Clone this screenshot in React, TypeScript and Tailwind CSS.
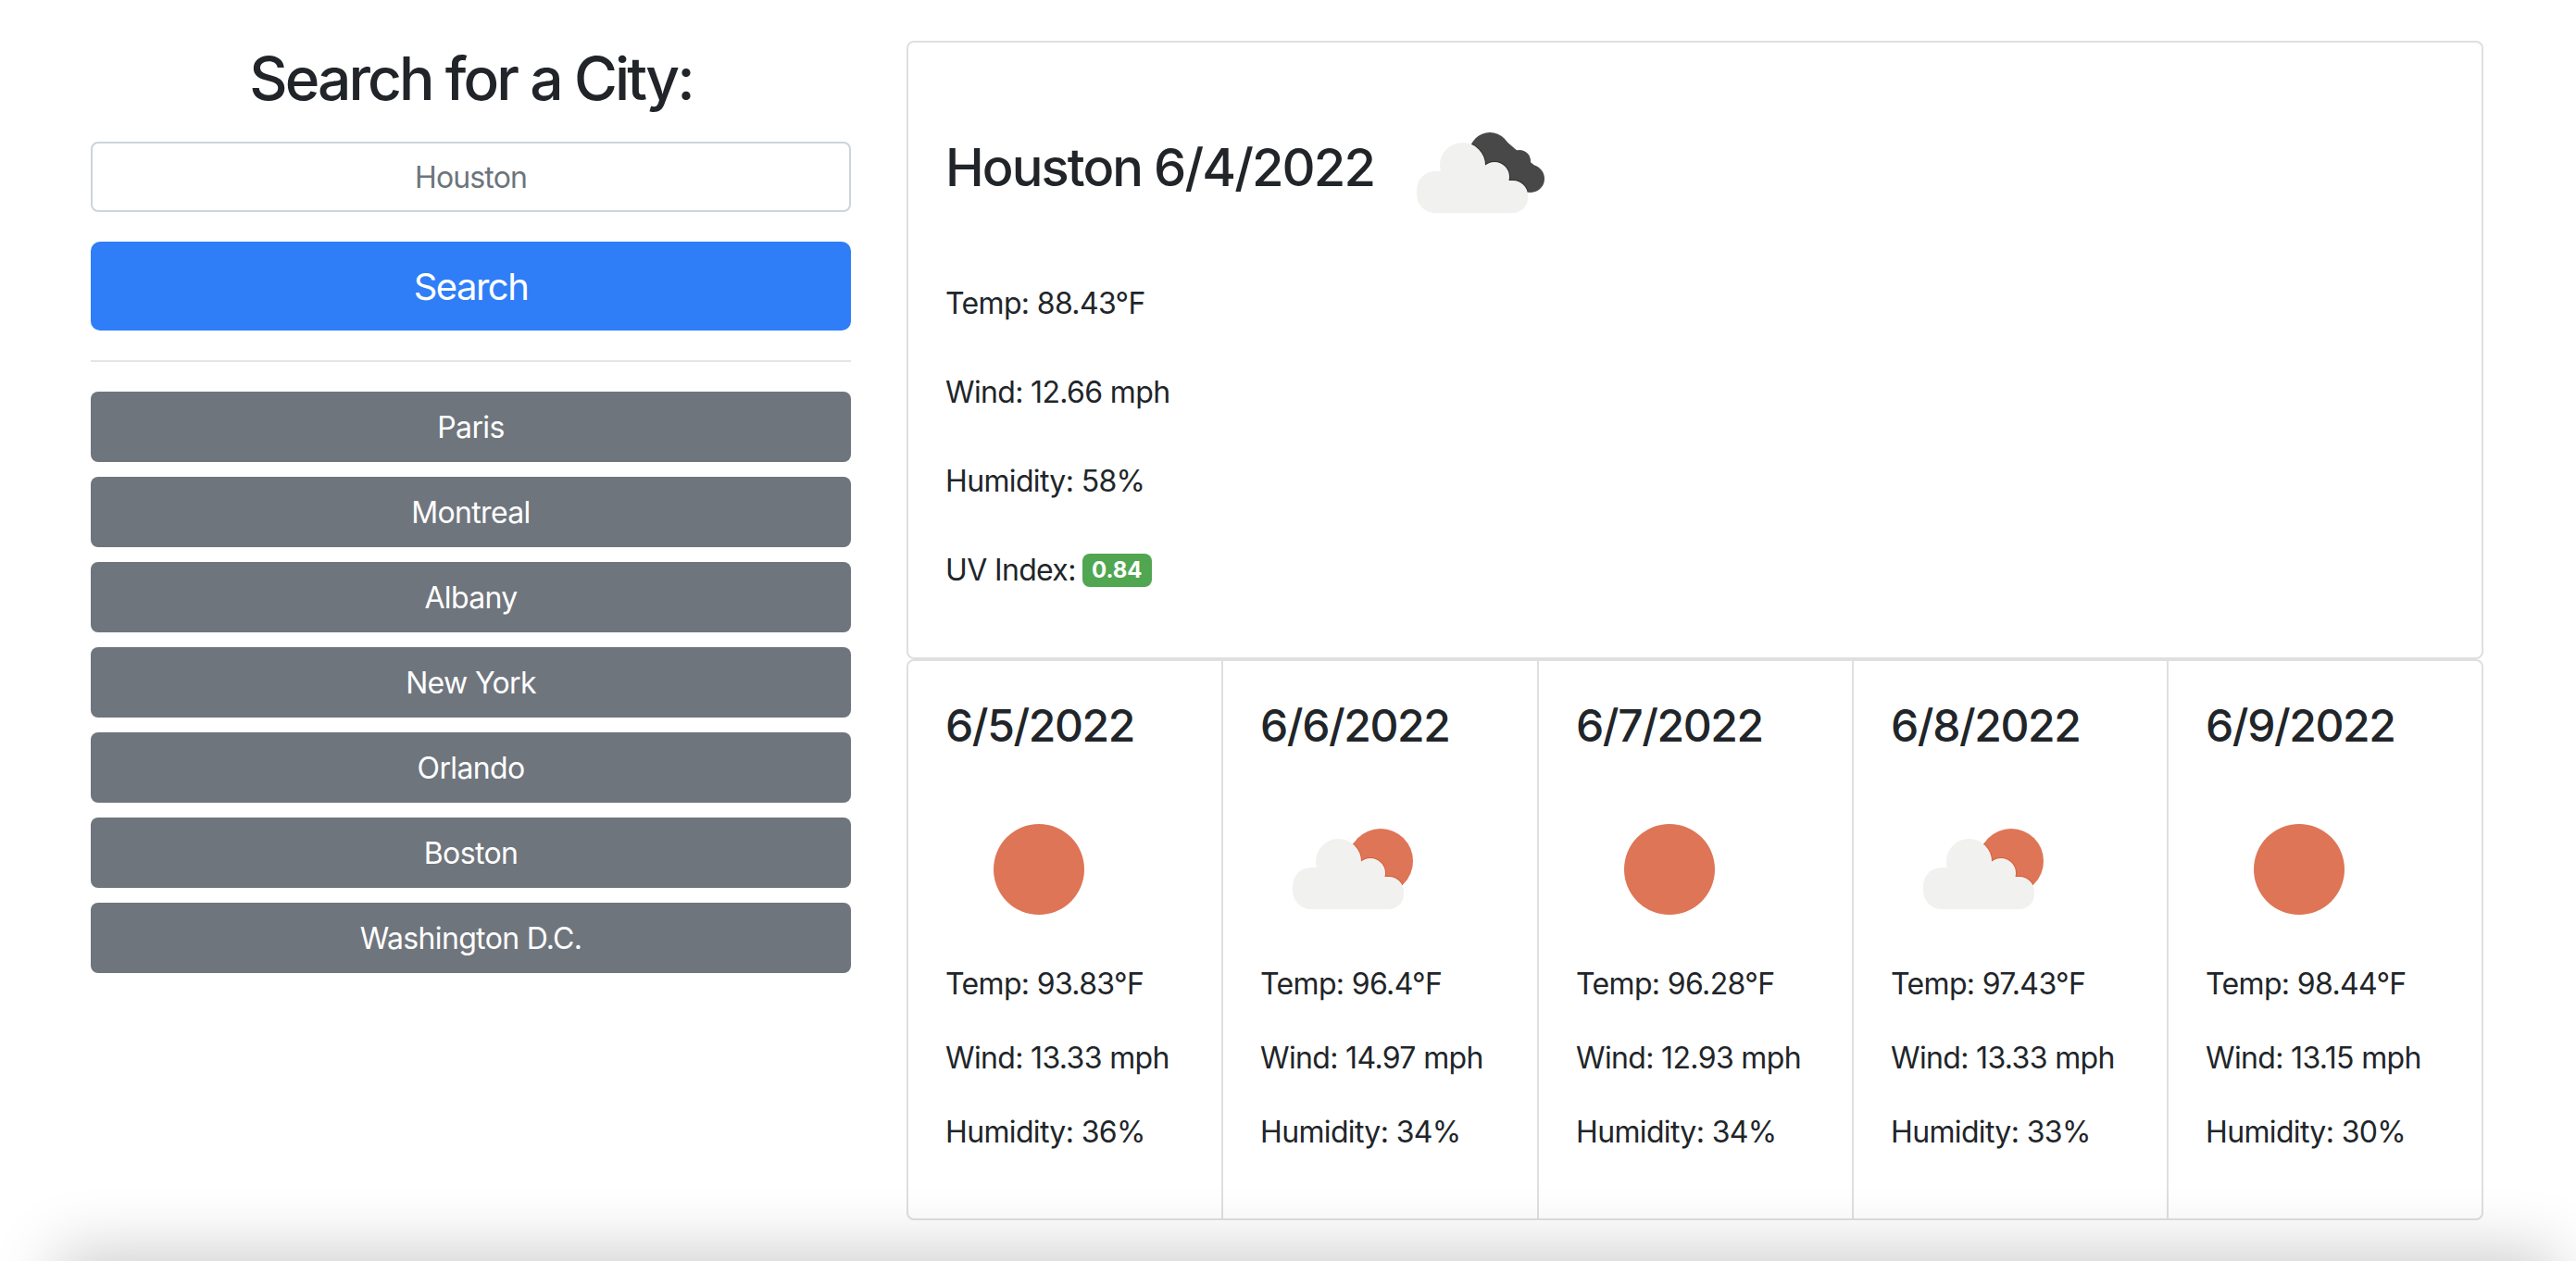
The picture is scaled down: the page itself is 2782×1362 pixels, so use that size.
const CITIES = ["Paris", "Montreal", "Albany", "New York", "Orlando", "Boston", "Washington D.C."];
const FORECAST = [
  { d: "6/5/2022", i: "sun", t: "93.83", w: "13.33", h: "36" },
  { d: "6/6/2022", i: "partly", t: "96.4", w: "14.97", h: "34" },
  { d: "6/7/2022", i: "sun", t: "96.28", w: "12.93", h: "34" },
  { d: "6/8/2022", i: "partly", t: "97.43", w: "13.33", h: "33" },
  { d: "6/9/2022", i: "sun", t: "98.44", w: "13.15", h: "30" },
];

function CloudParts() {
  return (
    <>
      <rect x="34" y="98" width="64" height="45" rx="20" />
      <rect x="90" y="108" width="64" height="35" rx="16" />
      <circle cx="83.5" cy="91.5" r="24.5" />
      <circle cx="118" cy="104" r="16" />
      <rect x="60" y="100" width="70" height="43" />
    </>
  );
}

function Icon({ kind }: { kind: string }) {
  return (
    <svg viewBox="0 0 200 200" className="w-[200px] h-[200px] block shrink-0">
      {kind === "sun" && <circle cx="100" cy="100" r="49" fill="#de7556" />}
      {kind === "partly" && (
        <>
          <defs>
            <clipPath id="sun-clip"><circle cx="129" cy="91" r="35" /></clipPath>
          </defs>
          <circle cx="129" cy="91" r="35" fill="#de7556" />
          <g clipPath="url(#sun-clip)" fill="#d9603c" stroke="#d9603c" strokeWidth="2"><CloudParts /></g>
          <g fill="#f1f2f0"><CloudParts /></g>
        </>
      )}
      {kind === "dark" && (
        <>
          <defs>
            <clipPath id="dark-clip">
              <circle cx="113" cy="78" r="22" />
              <circle cx="145" cy="87" r="12" />
              <circle cx="157" cy="106" r="15" />
              <path d="M95 68 L130 65 L165 95 L155 120 L110 110 Z" />
            </clipPath>
          </defs>
          <g fill="#484849">
            <circle cx="113" cy="78" r="22" />
            <circle cx="145" cy="87" r="12" />
            <circle cx="157" cy="106" r="15" />
            <path d="M95 68 L130 65 L165 95 L155 120 L110 110 Z" />
          </g>
          <g clipPath="url(#dark-clip)" fill="#2e2e30" stroke="#2e2e30" strokeWidth="2"><CloudParts /></g>
          <g fill="#f1f2f0"><CloudParts /></g>
        </>
      )}
    </svg>
  );
}

export default function App() {
  return (
    <div className="relative w-[2782px] h-[1362px] overflow-hidden bg-white text-[#212529] text-[32px] leading-[48px] tracking-[-0.65px] font-['Inter','Liberation_Sans',sans-serif]">
      <div className="flex gap-[60px] pl-[98px] pt-[44px]">
        <div className="w-[821px] shrink-0 flex flex-col">
          <h3 className="text-[64px] leading-[67px] font-[550] text-center mt-[7px] tracking-[-2.9px]">Search for a City:</h3>
          <input
            placeholder="Houston"
            className="mt-[35px] h-[76px] w-full rounded-lg border-2 border-[#ced4da] bg-white text-center text-[32px] tracking-[-0.85px] outline-none placeholder:text-[#6c757d]"
          />
          <button className="mt-[32px] h-[96px] pt-[2px] w-full rounded-[10px] bg-[#2f7ef7] text-white text-[40px] tracking-[-1.5px]">Search</button>
          <div className="mt-[32px] h-[2px] bg-[#e4e5e6]" />
          <div className="mt-[32px] flex flex-col gap-4">
            {CITIES.map((c) => (
              <button key={c} className="h-[76px] pt-[2px] w-full rounded-lg bg-[#6f757d] text-white text-[32px]">{c}</button>
            ))}
          </div>
        </div>

        <div className="w-[1703px] shrink-0 flex flex-col">
          <section className="h-[668px] rounded-lg border-2 border-[#dfdfdf] pl-[40px] pt-[41px]">
            <div className="flex items-center h-[200px] gap-[12px]">
              <h2 className="text-[56px] leading-[72px] font-[550] mb-[12px] tracking-[-1.9px]">Houston 6/4/2022</h2>
              <Icon kind="dark" />
            </div>
            <div className="mt-[17px] flex flex-col gap-[48px]">
              <p>Temp: 88.43°F</p>
              <p>Wind: 12.66 mph</p>
              <p>Humidity: 58%</p>
              <p className="flex items-center">
                UV Index:
                <span className="ml-[7px] inline-flex items-center justify-center h-[36px] w-[75px] rounded-lg bg-[#51a651] text-white text-[24px] tracking-normal font-bold leading-none">0.84</span>
              </p>
            </div>
          </section>

          <section className="h-[606px] grid grid-cols-[338px_341px_340px_340px_340px] rounded-lg border-2 border-[#dfdfdf]">
            {FORECAST.map((f, i) => (
              <div key={f.d} className={`pl-[40px] pt-[41px] ${i > 0 ? "border-l-2 border-[#dfdfdf]" : ""}`}>
                <h4 className="text-[48px] leading-[58px] font-[550] tracking-[-1.4px]">{f.d}</h4>
                <div className="mt-[26px] ml-px"><Icon kind={f.i} /></div>
                <div className="flex flex-col gap-[32px]">
                  <p>Temp: {f.t}°F</p>
                  <p>Wind: {f.w} mph</p>
                  <p>Humidity: {f.h}%</p>
                </div>
              </div>
            ))}
          </section>
        </div>
      </div>
      <div className="absolute top-[1372px] left-[80px] right-[40px] h-[100px] shadow-[0_0_70px_20px_rgba(0,0,0,0.2)]" />
    </div>
  );
}
